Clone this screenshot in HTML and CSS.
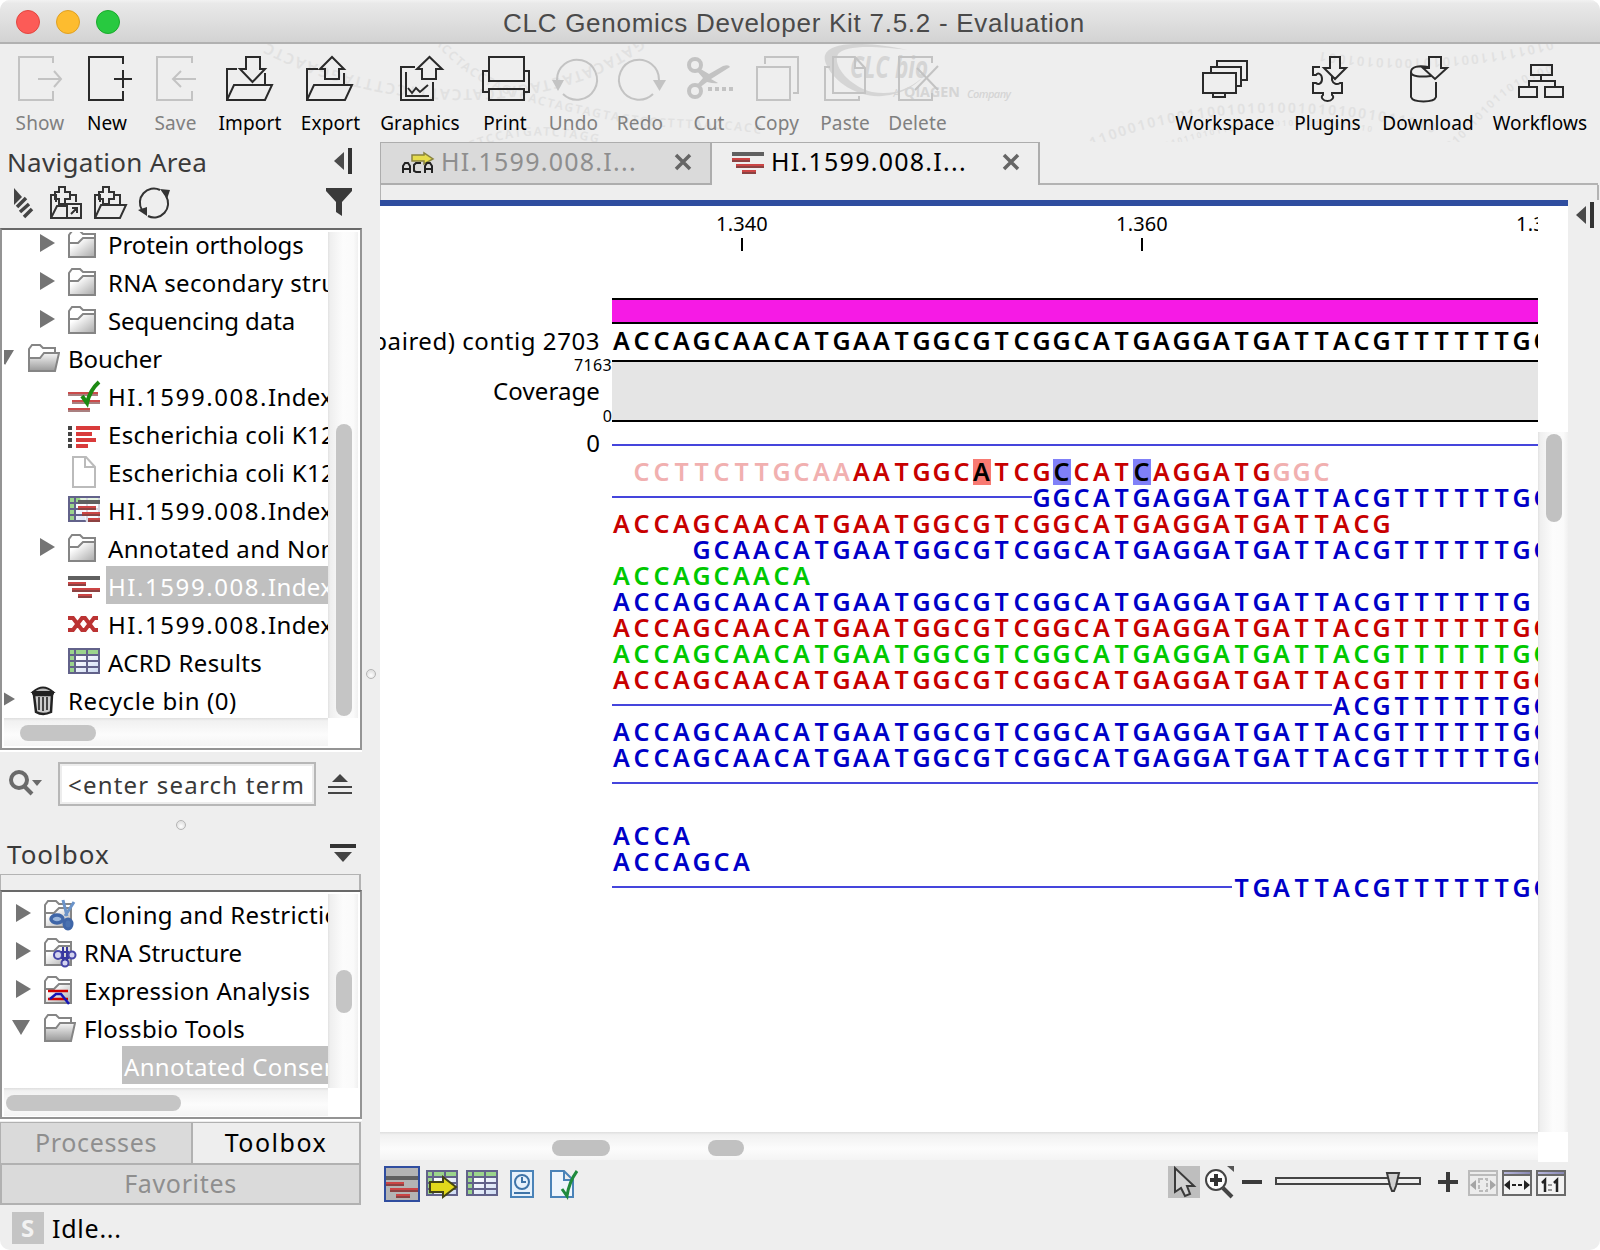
FILE: index.html
```html
<!DOCTYPE html>
<html lang="en">
<head>
<meta charset="utf-8">
<title>CLC Genomics Developer Kit 7.5.2 - Evaluation</title>
<link rel="stylesheet" href="styles.css">
</head>
<body>
<svg class="defs" width="0" height="0" aria-hidden="true">
  <defs>
    <linearGradient id="gFolder" x1="0" y1="0" x2="1" y2="1"><stop offset=".25" stop-color="#fff"/><stop offset="1" stop-color="#a8a8a8"/></linearGradient>
    <linearGradient id="gOpen" x1="0" y1="0" x2="0" y2="1"><stop offset="0" stop-color="#f6f6f6"/><stop offset="1" stop-color="#999"/></linearGradient>
    <linearGradient id="gCell" x1="0" y1="0" x2="1" y2="1"><stop offset="0" stop-color="#fff"/><stop offset="1" stop-color="#cfdcf3"/></linearGradient>
    <linearGradient id="gBar" x1="0" y1="0" x2="1" y2="0"><stop offset="0" stop-color="#b9b9dd"/><stop offset="1" stop-color="#8888b4"/></linearGradient>
    <symbol id="folder" viewBox="0 0 32 32">
      <path d="M1 29V7l3-4h8l3 3h12v23z" fill="#fff" stroke="#858585" stroke-width="2"/>
      <path d="M1 29V15h9l5-5h12v19z" fill="url(#gFolder)" stroke="#858585" stroke-width="2"/>
    </symbol>
    <symbol id="open" viewBox="0 0 32 32">
      <path d="M1 29V7l3-4h8l3 3h12v6" fill="#fff" stroke="#858585" stroke-width="2"/>
      <path d="M1 29V16h11l4-5h15l-4 18z" fill="url(#gOpen)" stroke="#858585" stroke-width="2"/>
    </symbol>
    <symbol id="right" viewBox="0 0 18 18"><path d="M0 0L15 9L0 18z" fill="#747474"/></symbol>
    <symbol id="down" viewBox="0 0 18 18"><path d="M0 0H18L9 15z" fill="#747474"/></symbol>
    <symbol id="reads" viewBox="0 0 32 24">
      <path d="M0 0h32v4H0z" fill="#606060"/><path d="M0 6h18v2H0zM4 12h28v2H4zM10 18h14v2H10z" fill="#cb4545"/>
      <path d="M0 8h18v2H0zM4 14h28v2H4zM10 20h14v2H10z" fill="#8c4242"/>
    </symbol>
    <symbol id="table" viewBox="0 0 32 26">
      <path d="M0 0h32v26H0z" fill="#62628a"/>
      <path d="M2 2h4v4H2zM8 2h10v4H8zM20 2h10v4H20zM2 8h4v4H2zM2 14h4v4H2zM2 20h4v4H2z" fill="#9bd48c"/>
      <path d="M8 8h10v4H8zM20 8h10v4H20zM8 14h10v4H8zM20 14h10v4H20zM8 20h10v4H8zM20 20h10v4H20z" fill="url(#gCell)"/>
    </symbol>
  </defs>
</svg>

<div class="window">
  <header class="titlebar">
    <span class="light light-close"></span><span class="light light-min"></span><span class="light light-zoom"></span>
    <h1>CLC Genomics Developer Kit 7.5.2 - Evaluation</h1>
  </header>

  <div class="toolbar">
    <svg class="watermark" width="1600" height="98" viewBox="0 44 1600 98" aria-hidden="true">
      <defs>
        <path id="w1" d="M640 38C560 100 400 112 262 40"/>
        <path id="w2" d="M434 42C480 95 530 104 610 120S740 118 810 150"/>
        <path id="w3" d="M470 150C520 130 560 130 640 155"/>
        <path id="w4" d="M1552 40C1470 62 1370 66 1284 44"/>
        <path id="w5" d="M1092 148C1180 108 1330 96 1470 144"/>
        <path id="w6" d="M1450 150C1490 120 1500 70 1600 66"/>
        <path id="w7" d="M1166 148C1240 122 1330 116 1420 144"/>
      </defs>
      <g class="strand">
        <text font-size="15"><textPath href="#w1">GATACATACTAGATCATCATTTCCTTTAGGAACTC</textPath></text>
        <text font-size="12"><textPath href="#w2">ACCTACCTAGTCACTAGTAGTAGTCCCTTTAAGCACC</textPath></text>
        <text font-size="12"><textPath href="#w3">CTCCATGATCTAGG</textPath></text>
        <text font-size="13"><textPath href="#w4">0101111100101010010101001</textPath></text>
        <text font-size="14"><textPath href="#w5">11000101001100101010010101001011010</textPath></text>
        <text font-size="11"><textPath href="#w6">0101101011010100</textPath></text>
        <text font-size="8"><textPath href="#w7">01011010110101001010100101010010</textPath></text>
      </g>
      <g class="brand">
        <path d="M908 50C850 38 815 44 827 66C836 84 860 98 882 96C905 94 916 84 922 78C905 92 890 95 872 92C850 86 832 66 838 54C844 46 870 45 908 50Z"/>
        <text x="850" y="78" font-size="30" font-weight="700" font-style="italic" textLength="78" lengthAdjust="spacingAndGlyphs">CLC bio</text>
        <text x="893" y="97" font-size="11">A</text>
        <text x="904" y="97" font-size="15" font-weight="700" textLength="56" lengthAdjust="spacingAndGlyphs">QIAGEN</text>
        <text x="967" y="98" font-size="11" font-style="italic" font-weight="600" textLength="44">Company</text>
      </g>
    </svg>
    <nav class="tools tools-main">
      <div class="tool off"><svg class="ico" viewBox="0 0 48 48"><path d="M37 9V3H3V46H37V37M22 25H45M38 17L45 25L38 33"/></svg><span>Show</span></div>
      <div class="tool"><svg class="ico" viewBox="0 0 48 48"><path d="M40 10V3H6V46H40V37M31 25H49M40 16V34"/></svg><span>New</span></div>
      <div class="tool off"><svg class="ico" viewBox="0 0 48 48"><path d="M40 9V3H5V46H40V37M21 25H44M29 17L21 25L29 33"/></svg><span>Save</span></div>
      <div class="tool"><svg class="ico" viewBox="0 0 48 48"><path d="M11 15H1V46H39L46 31H8L1 46M39 19V31M20 3H34V15H39L26.500 28L14 15H20Z"/></svg><span>Import</span></div>
      <div class="tool"><svg class="ico" viewBox="0 0 48 48"><path d="M11 15H0V46H38L45 31H7L0 46M37 19V31M18 25V15H13L25 3L37 15H32V25Z"/></svg><span>Export</span></div>
      <div class="tool"><svg class="ico" viewBox="0 0 48 48"><path d="M19 13H5V46H37V28M10 18V42H33M12 34L16 39L20 34L24 38L32 31M26 25V15H21L33.500 3L46 15H40V25Z"/></svg><span>Graphics</span></div>
      <div class="tool"><svg class="ico" viewBox="0 0 48 48"><path d="M8 3H43V27H8ZM8 35H43V46H8ZM8 17H2V38H8M43 17H48V38H43"/></svg><span>Print</span></div>
      <div class="tool off"><svg class="ico" viewBox="0 0 48 48"><path d="M7 26A20 20 0 1 1 13 40"/><path class="solid" d="M2 26H14L8 37Z"/></svg><span>Undo</span></div>
      <div class="tool off"><svg class="ico" viewBox="0 0 48 48"><path d="M43 26A20 20 0 1 0 37 40"/><path class="solid" d="M37 26H50L43.500 37Z"/></svg><span>Redo</span></div>
      <div class="tool off"><svg class="ico" viewBox="0 0 48 48"><g stroke-width="4"><circle cx="10" cy="11" r="6"/><circle cx="10" cy="37" r="6"/></g><path class="solid" d="M14 14L24 20L38 12Q44 10 45 13L26 25L33 29Q30 30 22 28L14 34L12 31L18 24L12 17Z"/><path stroke-width="4" stroke-dasharray="4 3" d="M23 35H49"/></svg><span>Cut</span></div>
      <div class="tool off"><svg class="ico" viewBox="0 0 48 48"><path d="M4 13H37V46H4ZM12 10V3H45V39H40"/></svg><span>Copy</span></div>
      <div class="tool off"><svg class="ico" viewBox="0 0 48 48"><path d="M9 13H4V46H38V42M12 3H34L44 14V39H12ZM34 3V14H44"/></svg><span>Paste</span></div>
      <div class="tool off"><svg class="ico" viewBox="0 0 48 48"><path d="M38 9V3H5V46H38V39M21 36L44 12M23 14L44 36"/></svg><span>Delete</span></div>
    </nav>
    <nav class="tools tools-side">
      <div class="tool"><svg class="ico" viewBox="0 0 48 48"><path d="M2 19H35V39H2ZM12 39V43H24V39M10 18V13H40V32H36M16 12V7H46V26H41"/></svg><span>Workspace</span></div>
      <div class="tool"><svg class="ico" viewBox="0 0 48 48"><path d="M16 13H9V21H12C14 18 18 20 18 25S14 31 12 29H9V39H19V41C16 43 19 47 23.500 47S31 43 28 41V39H38V29H36C33 31 29 30 28 26V22M26 3H36V14H42L31 25L20 14H26Z"/></svg><span>Plugins</span></div>
      <div class="tool"><svg class="ico" viewBox="0 0 48 48"><path d="M24 13C14 11 7 13 7 18S17 23 27 22M7 18V43C9 49 30 49 32 43V28M25 3H37V14H43L31 25L19 14H25Z"/></svg><span>Download</span></div>
      <div class="tool"><svg class="ico" viewBox="0 0 48 48"><path d="M15 11H36V21H15ZM25 21V27M13 33V27H39V33M3 33H21V43H3ZM29 33H47V43H29Z"/></svg><span>Workflows</span></div>
    </nav>
  </div>

  <div class="body">
    <aside class="side">
      <div class="side-head"><h2>Navigation Area</h2>
        <svg width="20" height="28" viewBox="0 0 20 28"><path d="M0 14L10 5V23Z" fill="#4a4a4a"/><path d="M14 1h4v26h-4z" fill="#333"/></svg></div>
      <div class="side-tools">
        <svg width="20" height="32" viewBox="0 0 20 32"><path d="M0 2L8 11L0 19Z" fill="#444"/><path d="M3 21L12 12M6 26L15 18M10 31L18 23" stroke="#444" stroke-width="3.500"/></svg>
        <svg class="line" width="34" height="34" viewBox="0 0 34 34"><path d="M6 16V9H1V32H16M1 32L7 20H16M9 6V1H15V6H20V13H15V18H9V13H5V6ZM20 9H26V16M17 18H31V32H17ZM21 28L27 22M22 22H27V27"/></svg>
        <svg class="line" width="34" height="34" viewBox="0 0 34 34"><path d="M6 16V9H1V32H26L32 19H7L1 32M9 6V1H15V6H20V13H15V18H9V13H5V6ZM20 9H26V18"/></svg>
        <svg class="line" width="34" height="34" viewBox="0 0 34 34"><path d="M4 24A14 14 0 0 1 22 4M28 10A14 14 0 0 1 10 30"/><path d="M22 3L32 4L29 13ZM0 24L9 21L9 30Z" fill="#333" stroke="none"/></svg>
        <svg class="funnel" width="26" height="30" viewBox="0 0 26 30"><path d="M0 0H26V3L16 14V28L10 24V14L0 3Z" fill="#3a3a3a"/></svg>
      </div>

      <section class="pane pane-nav">
        <div class="tree tree-nav">
          <div class="row l2"><svg class="tw"><use href="#right"/></svg><svg class="ic"><use href="#folder"/></svg><span class="t snug">Protein orthologs</span></div>
          <div class="row l2"><svg class="tw"><use href="#right"/></svg><svg class="ic"><use href="#folder"/></svg><span class="t">RNA secondary structure</span></div>
          <div class="row l2"><svg class="tw"><use href="#right"/></svg><svg class="ic"><use href="#folder"/></svg><span class="t snug">Sequencing data</span></div>
          <div class="row l1"><svg class="tw tw-down"><use href="#down"/></svg><svg class="ic"><use href="#open"/></svg><span class="t snug">Boucher</span></div>
          <div class="row l2"><span class="tw"></span><svg class="ic" viewBox="0 0 32 32"><path d="M0 12h30v2H0zM4 20h28v2H4zM0 28h22v2H0z" fill="#cb4b4b"/><path d="M0 14h30v2H0zM4 22h28v2H4zM0 30h22v2H0z" fill="#a98080"/><path d="M14 16L19 23Q22 10 31 2" fill="none" stroke="#1d8a12" stroke-width="4"/></svg><span class="t"><span class="num">HI.1599.008.</span>Index</span></div>
          <div class="row l2"><span class="tw"></span><svg class="ic" viewBox="0 0 32 32"><path d="M0 8h4v4H0zM0 14h4v4H0zM0 20h4v4H0zM0 26h4v4H0z" fill="#444"/><path d="M8 8h24v4H8zM8 14h16v4H8zM8 20h20v4H8zM8 26h12v4H8z" fill="#d93b3b"/></svg><span class="t">Escherichia coli K12</span></div>
          <div class="row l2"><span class="tw"></span><svg class="ic" viewBox="0 0 32 32"><path d="M5 1H18L27 11V31H5ZM17 1V11H27" fill="#fff" stroke="#bbb" stroke-width="2"/></svg><span class="t">Escherichia coli K12</span></div>
          <div class="row l2"><span class="tw"></span><svg class="ic" viewBox="0 0 32 32"><use href="#table" x="0" y="2" width="32" height="26"/><path d="M12 4h20v24H18z" fill="#fff" opacity=".75"/><path d="M10 6h22v4H10z" fill="#606060"/><path d="M10 12h18v2H10zM14 18h18v2H14zM20 24h12v2H20z" fill="#cb4545"/><path d="M10 14h18v2H10zM14 20h18v2H14zM20 26h12v2H20z" fill="#8c4242"/></svg><span class="t"><span class="num">HI.1599.008.</span>Index</span></div>
          <div class="row l2"><svg class="tw"><use href="#right"/></svg><svg class="ic"><use href="#folder"/></svg><span class="t">Annotated and Non-</span></div>
          <div class="row l2 sel"><span class="tw"></span><svg class="ic" viewBox="0 0 32 32"><use href="#reads" x="0" y="6" width="32" height="24"/></svg><span class="t"><span class="num">HI.1599.008.</span>Index</span></div>
          <div class="row l2"><span class="tw"></span><svg class="ic" viewBox="0 0 32 32"><path d="M0 10H5L14 22H17L26 10H30M0 22H5L14 10H17L26 22H30" fill="none" stroke="#b33" stroke-width="4"/></svg><span class="t"><span class="num">HI.1599.008.</span>Index</span></div>
          <div class="row l2"><span class="tw"></span><svg class="ic" viewBox="0 0 32 32"><use href="#table" x="0" y="2" width="32" height="26"/></svg><span class="t">ACRD Results</span></div>
          <div class="row l1"><svg class="tw"><use href="#right"/></svg><svg class="ic" viewBox="0 0 32 32"><path d="M5 8Q15-1 25 8Z" fill="#bbb" stroke="#222" stroke-width="2"/><path d="M4 9H26" stroke="#222" stroke-width="3"/><path d="M6 11H24L23 28Q15 32 8 28Z" fill="#ccc" stroke="#222" stroke-width="2.500"/><path d="M11 13V26M15 13V27M19 13V26" stroke="#444" stroke-width="2"/></svg><span class="t loose">Recycle bin (0)</span></div>
        </div>
        <div class="vbar"><span class="thumb thumb-nav-v"></span></div>
        <div class="hbar"><span class="thumb thumb-nav-h"></span></div>
      </section>
      <span class="dot dot-side"></span>

      <div class="search">
        <svg width="36" height="28" viewBox="0 0 36 28"><circle cx="11" cy="10" r="8" fill="none" stroke="#6a6a6a" stroke-width="4"/><path d="M16 16L24 24" stroke="#6a6a6a" stroke-width="4"/><path d="M24 10H34L29 16Z" fill="#6a6a6a"/></svg>
        <div class="field">&lt;enter search term</div>
        <svg class="eject" width="24" height="22" viewBox="0 0 24 22"><path d="M12 0L20 8H4Z" fill="#444"/><path d="M0 12h24v2H0zM0 18h24v2H0z" fill="#444"/></svg>
      </div>
      <div class="grip"><span class="dot"></span></div>
      <div class="side-head box-head"><h2>Toolbox</h2>
        <svg width="26" height="20" viewBox="0 0 26 20"><path d="M0 0h26v4H0z" fill="#333"/><path d="M4 8H22L13 18Z" fill="#444"/></svg></div>
      <div class="tabstrip"></div>
      <section class="pane pane-box">
        <div class="tree tree-box">
          <div class="row l0"><svg class="tw"><use href="#right"/></svg><svg class="ic" viewBox="0 0 32 32"><use href="#folder" width="32" height="32"/><path d="M19 2L23 18M30 4L21 18" stroke="#6b93c9" stroke-width="3"/><ellipse cx="13" cy="21" rx="6" ry="4" fill="#9ab6dc" stroke="#3f66a8" stroke-width="3.500"/><ellipse cx="24" cy="26" rx="4" ry="5" fill="#4a72b0" stroke="#3f66a8" stroke-width="3"/></svg><span class="t">Cloning and Restriction</span></div>
          <div class="row l0"><svg class="tw"><use href="#right"/></svg><svg class="ic" viewBox="0 0 32 32"><use href="#folder" width="32" height="32"/><g fill="#d4d4f0" stroke="#4646a8" stroke-width="2"><circle cx="14" cy="19" r="4"/><circle cx="28" cy="19" r="3.500"/><circle cx="21" cy="27" r="3.500"/></g><path d="M19 11V25M23 11V25M17 16H25M17 22H25" stroke="#3838a0" stroke-width="2"/></svg><span class="t snug">RNA Structure</span></div>
          <div class="row l0"><svg class="tw"><use href="#right"/></svg><svg class="ic" viewBox="0 0 32 32"><use href="#folder" width="32" height="32"/><path d="M4 17H24M4 25H24" stroke="#d00000" stroke-width="2.500"/><path d="M6 25L12 20H17L25 30" fill="none" stroke="#1515b8" stroke-width="2.500"/></svg><span class="t">Expression Analysis</span></div>
          <div class="row l0"><svg class="tw tw-down"><use href="#down"/></svg><svg class="ic"><use href="#open"/></svg><span class="t">Flossbio Tools</span></div>
          <div class="row leaf sel"><span class="t">Annotated Consensus</span></div>
        </div>
        <div class="vbar"><span class="thumb thumb-box-v"></span></div>
        <div class="hbar"><span class="thumb thumb-box-h"></span></div>
      </section>
      <div class="sheets">
        <div class="sheet">Processes</div>
        <div class="sheet on">Toolbox</div>
        <div class="sheet wide">Favorites</div>
      </div>
      <footer class="status"><b>S</b><span>Idle...</span></footer>
    </aside>

    <main class="main">
      <div class="tabs">
        <div class="tab"><svg width="32" height="24" viewBox="0 0 32 24"><path d="M10 3H22V1L31 7L22 12V9H10Z" fill="#e6dc4c" stroke="#8a8440" stroke-width="1.500"/><path d="M1 21V14L3 11H6L8 14V21M1 17H8M19 11H14L12 13V19L14 20H19M23 21V14L25 11H28L30 14V21M23 17H30" fill="none" stroke="#222" stroke-width="2"/></svg><span>HI.1599.008.I...</span><svg class="x" width="18" height="18" viewBox="0 0 18 18"><path d="M2 2L16 16M16 2L2 16"/></svg></div>
        <div class="tab on"><svg width="32" height="24" viewBox="0 0 32 24"><use href="#reads" width="32" height="24"/></svg><span>HI.1599.008.I...</span><svg class="x" width="18" height="18" viewBox="0 0 18 18"><path d="M2 2L16 16M16 2L2 16"/></svg></div>
        <div class="tab-rest"></div>
      </div>
      <div class="frame"></div>
      <div class="work">
        <div class="view">
          <div class="labels">
            <div class="lb-name"><span>paired) contig 2703</span></div>
            <div class="lb-max">7163</div>
            <div class="lb-cov">Coverage</div>
            <div class="lb-min">0</div>
            <div class="lb-zero">0</div>
          </div>
          <div class="track">
            <div class="ruler"><div class="mark">1.340</div><div class="mark">1.360</div><div class="mark">1.380</div></div>
            <div class="annotation"></div>
            <div class="consensus" id="consensus"></div>
            <div class="coverage"></div>
            <div class="mapping" id="mapping"></div>
          </div>
          <div class="vbar vbar-main"><span class="thumb thumb-main-v"></span></div>
          <div class="hbar hbar-main"><span class="thumb thumb-h1"></span><span class="thumb thumb-h2"></span></div>
          <div class="corner"></div>
        </div>
        <div class="gutter"><svg width="20" height="28" viewBox="0 0 20 28"><path d="M0 14L10 5V23Z" fill="#4a4a4a"/><path d="M14 1h4v26h-4z" fill="#333"/></svg></div>
      </div>
      <div class="viewbar">
        <span class="pick"><svg width="32" height="24" viewBox="0 0 32 24"><use href="#reads" width="32" height="24"/></svg></span>
        <svg class="b2" width="32" height="28" viewBox="0 0 32 28"><use href="#table" width="32" height="26"/><path d="M4 12H17V7L30 17L17 27V22H4Z" fill="#e2d81c" stroke="#444416" stroke-width="2"/></svg>
        <svg class="b3" width="32" height="26"><use href="#table" width="32" height="26"/></svg>
        <svg class="b4" width="24" height="28" viewBox="0 0 24 28"><path d="M1 1H23V27H1Z" fill="#e6f1fb" stroke="#4a83b8" stroke-width="2"/><circle cx="12" cy="12" r="7" fill="none" stroke="#3e74a8" stroke-width="2"/><path d="M12 7V12H16M4 23H20" fill="none" stroke="#3e74a8" stroke-width="2"/></svg>
        <svg class="b5" width="28" height="28" viewBox="0 0 28 28"><path d="M1 1H14L23 10V27H1ZM14 1V10H23" fill="#eef5fc" stroke="#4a83b8" stroke-width="2"/><path d="M12 19L17 26Q19 12 27 1" fill="none" stroke="#1f8a3c" stroke-width="3"/></svg>
        <span class="space"></span>
        <span class="cursor"><svg width="32" height="32" viewBox="0 0 32 32"><path d="M7 2V26L13 22L17 30L22 28L19 20H26Z" fill="#d2d2d2" stroke="#3a3a3a" stroke-width="2"/></svg></span>
        <svg class="lens" width="30" height="34" viewBox="0 0 30 34"><circle cx="11" cy="14" r="10" fill="#fff" stroke="#444" stroke-width="2"/><path d="M11 8V20M5 14H17" stroke="#333" stroke-width="4"/><path d="M18 22L27 31" stroke="#444" stroke-width="4"/><path d="M22 0H29V6Z" fill="#555"/></svg>
        <svg class="minus" width="20" height="20" viewBox="0 0 20 20"><path d="M0 8h20v4H0z" fill="#3a3a3a"/></svg>
        <svg class="slider" width="146" height="20" viewBox="0 0 146 20"><path d="M1 6H145V12H1Z" fill="#f0f0f0" stroke="#444" stroke-width="2"/><path d="M112 1H124L121 14L119 19H117L115 14Z" fill="#d0d0d0" stroke="#3a3a3a" stroke-width="2"/></svg>
        <svg class="plus" width="20" height="20" viewBox="0 0 20 20"><path d="M0 8h20v4H0zM8 0h4v20H8z" fill="#3a3a3a"/></svg>
        <svg class="fit fit-off" width="30" height="26" viewBox="0 0 30 26"><path d="M1 1H29V25H1Z" fill="#ececec" stroke="#bbb" stroke-width="2"/><path d="M1 5H29" stroke="#bbb" stroke-width="2"/><path d="M2 15L8 10V20ZM28 15L22 10V20Z" fill="#a5a5a5"/><path d="M11 9H19V21H11Z" fill="none" stroke="#bbb" stroke-width="2" stroke-dasharray="4 2"/></svg>
        <svg class="fit" width="30" height="26" viewBox="0 0 30 26"><path d="M1 1H29V25H1Z" fill="#f3f3f3" stroke="#6a6a6a" stroke-width="2"/><path d="M2 2H28V4H2Z" fill="url(#gBar)"/><path d="M1 5H29" stroke="#6a6a6a" stroke-width="2"/><path d="M2 15L8 10V20ZM28 15L22 10V20Z" fill="#222"/><path d="M10 15H14M16 15H20" stroke="#222" stroke-width="2"/></svg>
        <svg class="fit" width="30" height="26" viewBox="0 0 30 26"><path d="M1 1H29V25H1Z" fill="#f3f3f3" stroke="#6a6a6a" stroke-width="2"/><path d="M2 2H28V4H2Z" fill="url(#gBar)"/><path d="M1 5H29" stroke="#6a6a6a" stroke-width="2"/><path d="M6 13L9 10V22M18 13L21 10V22" fill="none" stroke="#222" stroke-width="2.500"/><path d="M12 14h4v2h-4zM12 19h4v2h-4z" fill="#999"/></svg>
      </div>
    </main>
  </div>
</div>
<script src="script.js"></script>
</body>
</html>
```
FILE: styles.css
```css
* { box-sizing: border-box; }
body { margin: 0; background: #fff; font-family: "Noto Sans", "Open Sans", sans-serif; font-size: 24px; color: #000; overflow: hidden; }
h1, h2 { margin: 0; font-weight: 400; white-space: nowrap; }
svg { display: block; flex: none; overflow: visible; }
.defs { position: absolute; }

.window { width: 1600px; height: 1250px; display: flex; flex-direction: column; background: #eee; border-radius: 10px; overflow: hidden; }

.titlebar { height: 44px; display: flex; align-items: center; padding: 0 0 0 16px; gap: 16px; background: linear-gradient(#f2f2f2, #e9e9e9 8%, #d3d3d3); border-bottom: 2px solid #b1b1b1; }
.light { width: 24px; height: 24px; border-radius: 50%; border: 1px solid #e2463f; background: #fc5b57; margin-top: 2px; }
.light-min { border-color: #dfa023; background: #fdbc2f; }
.light-zoom { border-color: #1aaa2c; background: #28c940; }
h1 { margin-left: 367px; font-family: "Liberation Sans", Arial, sans-serif; font-size: 26px; letter-spacing: 0.73px; line-height: 44px; color: #4a4a4a; padding-top: 3px; }

.toolbar { position: relative; height: 98px; display: flex; justify-content: space-between; padding: 0 1px 0 7px; }
.watermark { position: absolute; left: 0; top: 0; overflow: hidden; }
.strand { fill: #e1e1e1; font-weight: 600; letter-spacing: 2px; }
.brand { fill: #d5d5d5; font-family: "Open Sans", sans-serif; }
.tools { position: relative; display: grid; padding-top: 10px; }
.tools-main { grid-template-columns: 66px 68px 69px 80px 81px 98px 72px 65px 68px 70px 65px 72px 73px; }
.tools-side { grid-template-columns: 110px 95px 106px 118px; }
.tool { display: flex; flex-direction: column; align-items: center; font-size: 19px; letter-spacing: 0.15px; line-height: 28px; gap: 7px; white-space: nowrap; }
.off { color: #808080; }
.ico { width: 48px; height: 48px; fill: none; stroke: #2a2a2a; stroke-width: 2; }
.off .ico { stroke: #c3c3c3; }
.ico .solid { fill: #c3c3c3; stroke: none; }

.body { flex: 1; display: flex; min-height: 0; }
.side { position: relative; width: 380px; display: flex; flex-direction: column; }
.side-head { height: 40px; display: flex; justify-content: space-between; padding: 5px 26px 0 7px; color: #3a3a3a; }
.side-head h2 { font-size: 26px; letter-spacing: 0.3px; line-height: 40px; margin-top: -5px; }
.side-tools { height: 46px; display: flex; align-items: flex-start; padding: 4px 0 0 14px; }
.side-tools svg + svg { margin-left: 10px; }
.side-tools svg:nth-child(2) { margin-left: 16px; }
.side-tools .funnel { margin: 2px 28px 0 auto; }
.line { fill: none; stroke: #333; stroke-width: 2; }

.pane { width: 362px; display: grid; grid-template-columns: 324px 30px; padding: 2px; border: 2px solid #949494; border-top-color: #696969; background: #fff; box-shadow: 0 2px #fff; }
.pane-nav { height: 522px; grid-template-rows: 486px 28px; }
.pane-box { height: 229px; grid-template-rows: 194px 28px; }
.tree { overflow: hidden; }
.tree-nav .row:first-child { margin-top: -8px; }
.row { height: 38px; display: flex; line-height: 41px; white-space: nowrap; letter-spacing: 0.35px; }
.l1 { padding-left: 0; margin-left: -4px; }
.l2 { padding-left: 36px; }
.l0 { padding-left: 12px; }
.leaf { padding-left: 118px; }
.tw { width: 18px; height: 18px; margin: 10px 10px 0 0; flex: none; }
.tw-down { margin: 12px 14px 0 -4px; }
.ic { width: 32px; height: 32px; margin: 4px 6px 0 0; }
.t { flex: 1; padding-left: 2px; }
.num { letter-spacing: 1.56px; }
.snug { letter-spacing: -0.1px; }
.loose { letter-spacing: 0.6px; }
.sel .t { background: #c0c0c0; color: #fff; }
.vbar { background: linear-gradient(90deg, #e2e2e2, #efefef 8%, #fcfcfc 50%, #fafafa 85%, #f0f0f0); padding: 0 8px; }
.hbar { background: linear-gradient(#dedede, #f1f1f1 10%, #fcfcfc 60%, #f4f4f4); display: flex; align-items: flex-start; }
.thumb { display: block; flex: none; width: 16px; height: 16px; border-radius: 8px; background: #c5c5c5; }
.thumb-nav-v { height: 292px; margin: 192px 0 0; }
.thumb-nav-h { width: 76px; margin: 7px 0 0 16px; }
.thumb-box-v { height: 43px; margin: 76px 0 0; }
.thumb-box-h { width: 175px; margin: 7px 0 0 2px; }

.dot { display: block; width: 10px; height: 10px; border-radius: 50%; background: radial-gradient(circle at 50% 65%, #fff, #e4e4e4 60%); border: 1px solid #b4b4b4; }
.dot-side { position: absolute; left: 366px; top: 527px; }
.search { height: 68px; margin-top: 2px; padding: 10px 0 0 8px; display: flex; align-items: flex-start; }
.search > svg { margin-top: 8px; }
.field { width: 258px; height: 44px; margin-left: 14px; padding-left: 8px; border: 2px solid #b7b7b7; background: #fff; box-shadow: inset 0 0 0 2px #ededed; line-height: 42px; letter-spacing: 1.2px; color: #3a3a3a; white-space: nowrap; }
.search .eject { margin: 12px 0 0 12px; }
.grip { height: 15px; padding: 0 0 0 176px; }
.box-head { height: 39px; padding-top: 9px; padding-right: 24px; }
.box-head h2 { margin-top: -10px; letter-spacing: 1px; }
.tabstrip { width: 361px; height: 16px; border: 1px solid #b3b3b3; border-width: 1px 2px 0 1px; }
.sheets { width: 361px; margin-top: 3px; display: grid; grid-template-columns: 193px 168px; grid-template-rows: 41px 42px; font-size: 25px; letter-spacing: 0.65px; }
.sheet { display: flex; justify-content: center; background: #dadada; border: solid #b1b1b1; border-width: 1px 2px 0 1px; color: #8e8e8e; line-height: 39px; }
.sheet.on { background: #eee; color: #000; border-left: 0; letter-spacing: 1.5px; }
.sheet.wide { grid-column: 1 / 3; border-width: 2px; line-height: 36px; }
.status { display: flex; gap: 8px; padding: 7px 0 0 12px; line-height: 32px; font-size: 25px; letter-spacing: 0.75px; }
.status b { width: 32px; height: 32px; background: #c4c4c4; color: #f2f2f2; text-align: center; font-size: 24px; line-height: 32px; }

.main { width: 1220px; display: flex; flex-direction: column; }
.tabs { height: 43px; display: flex; }
.tab { width: 330px; display: flex; padding: 0 0 0 21px; background: #dadada; border: solid #adadad; border-width: 1px 0 2px 1px; color: #8e8e8e; font-size: 25px; letter-spacing: 1.26px; line-height: 37px; }
.tab > svg { margin: 9px 7px 0 0; }
.tab .x { margin: 10px 18px 0 auto; fill: none; stroke: #666; stroke-width: 3.5; }
.tab.on { background: #eee; color: #000; border-width: 1px 2px 0 2px; padding-left: 20px; }
.tab-rest { flex: 1; border-bottom: 2px solid #b3b3b3; margin-right: 2px; }
.frame { height: 15px; margin-right: 1px; border: solid #b3b3b3; border-width: 0 2px 0 1px; }
.work { display: flex; height: 962px; }
.view { width: 1188px; display: grid; grid-template-columns: 232px 926px 30px; grid-template-rows: 926px 28px; background: #fff; border-top: 6px solid #2f4d9f; height: 960px; }
.gutter { padding: 1px 0 0 8px; flex: 1; }
.labels { overflow: hidden; display: flex; flex-direction: column; align-items: flex-end; white-space: nowrap; padding-top: 116px; padding-right: 12px; }
.labels > div { line-height: 38px; flex: none; }
.lb-name { height: 34px; width: 220px; display: flex; justify-content: flex-end; letter-spacing: 0.55px; }
.lb-max, .lb-min { font-size: 16px; margin-right: -12px; }
.labels > .lb-max { line-height: 18px; height: 16px; letter-spacing: 0.35px; }
.labels > .lb-cov { height: 36px; line-height: 38px; letter-spacing: 0.1px; }
.labels > .lb-min { line-height: 16px; height: 18px; }
.labels > .lb-zero { line-height: 33px; }
.track { overflow: hidden; }
.ruler { height: 92px; display: flex; padding: 6px 0 0 80px; font-size: 20px; letter-spacing: 0.15px; line-height: 24px; gap: 300px; margin-right: -400px; }
.mark { width: 100px; flex: none; text-align: center; height: 39px; background: linear-gradient(#000, #000) 49px 26px / 2px 13px no-repeat; }
.annotation { height: 26px; background: #f61ae5; border: solid #000; border-width: 2px 0; }
.consensus { height: 36px; padding-top: 4px; display: flex; }
.coverage { height: 62px; background: #e5e5e5; border: solid #000; border-width: 2px 0; margin-bottom: 11px; }
.read { height: 26px; display: flex; color: #0000c8; }
.base { width: 20px; flex: none; display: flex; justify-content: center; padding-right: 1px; font-size: 25px; font-weight: 600; line-height: 24.5px; height: 26px; }
.gap { height: 2px; margin-top: 11px; background: #4545dc; flex: none; }
.fwd { color: #c80000; }
.both { color: #00c800; }
.faint { color: #f1b0b0; }
.miss-a, .miss-c { color: #000; background: linear-gradient(#f87a72, #f87a72) 1px 0 / 18px 26px no-repeat; }
.miss-c { background-image: linear-gradient(#8080f8, #8080f8); }
.vbar-main { margin-top: 226px; padding: 2px 8px; }
.thumb-main-v { height: 88px; background: #c1c1c1; }
.hbar-main { grid-column: 1 / 3; }
.thumb-h1 { width: 58px; margin: 8px 0 0 172px; background: #c1c1c1; }
.thumb-h2 { width: 36px; margin: 8px 0 0 98px; background: #c1c1c1; }
.corner { background: #fff; height: 30px; }

.viewbar { display: flex; height: 40px; padding: 4px 34px 0 4px; }
.pick { width: 36px; height: 36px; border: 2px solid #2f4d9f; background: #b4b4b4; padding-top: 8px; }
.b2 { margin: 4px 0 0 6px; }
.b3 { margin: 4px 0 0 8px; }
.b4 { margin: 4px 0 0 12px; }
.b5 { margin: 4px 0 0 16px; }
.space { flex: 1; }
.cursor { width: 32px; height: 32px; background: #bebebe; }
.lens { margin-left: 5px; }
.minus { margin: 6px 0 0 7px; }
.slider { margin: 6px 0 0 13px; }
.plus { margin: 6px 10px 0 17px; }
.fit { margin: 4px 0 0 4px; }
.fit-off { margin-left: 0; }
```
FILE: script.js
```js
// Reference sequence in view, one base per 20px cell.
const REF = "ACCAGCAACATGAATGGCGTCGGCATGAGGATGATTACGTTTTTTGC";
// kind sets the colour; from/to are cells; gap is the length of the line drawn before the read.
const READS = [
  { gap: 47 },
  { kind: "fwd", from: 1, bases: "CCTTCTTGCAAAATGGCATCGCCATCAGGATGGGC", faint: [11, 32], miss: { 17: "miss-a", 21: "miss-c", 25: "miss-c" } },
  { kind: "rev", from: 21, gap: 21 },
  { kind: "fwd", from: 0, to: 39 },
  { kind: "rev", from: 4 },
  { kind: "both", from: 0, to: 10 },
  { kind: "rev", from: 0, to: 46 },
  { kind: "fwd", from: 0 },
  { kind: "both", from: 0 },
  { kind: "fwd", from: 0 },
  { kind: "rev", from: 36, gap: 36 },
  { kind: "rev", from: 0 },
  { kind: "rev", from: 0 },
  { gap: 47 },
  {},
  { kind: "rev", from: 0, to: 4 },
  { kind: "rev", from: 0, to: 7 },
  { kind: "rev", from: 31, gap: 31 },
];
function base(ch, cls) {
  const s = document.createElement("span");
  s.className = "base" + (cls ? " " + cls : "");
  s.textContent = ch;
  return s;
}
for (const ch of REF) document.getElementById("consensus").append(base(ch));
for (const r of READS) {
  const row = document.createElement("div");
  row.className = "read " + (r.kind || "");
  if (r.gap) {
    const g = document.createElement("span");
    g.className = "gap";
    g.style.width = r.gap * 20 + "px";
    row.append(g);
  } else if (r.from) {
    row.style.paddingLeft = r.from * 20 + "px";
  }
  if (r.kind) {
    const text = r.bases || REF.slice(r.from, r.to);
    [...text].forEach((ch, i) => {
      let cls = "";
      if (r.faint && (i < r.faint[0] || i >= r.faint[1])) cls = "faint";
      if (r.miss && r.miss[i]) cls = r.miss[i];
      row.append(base(ch, cls));
    });
  }
  document.getElementById("mapping").append(row);
}
```
